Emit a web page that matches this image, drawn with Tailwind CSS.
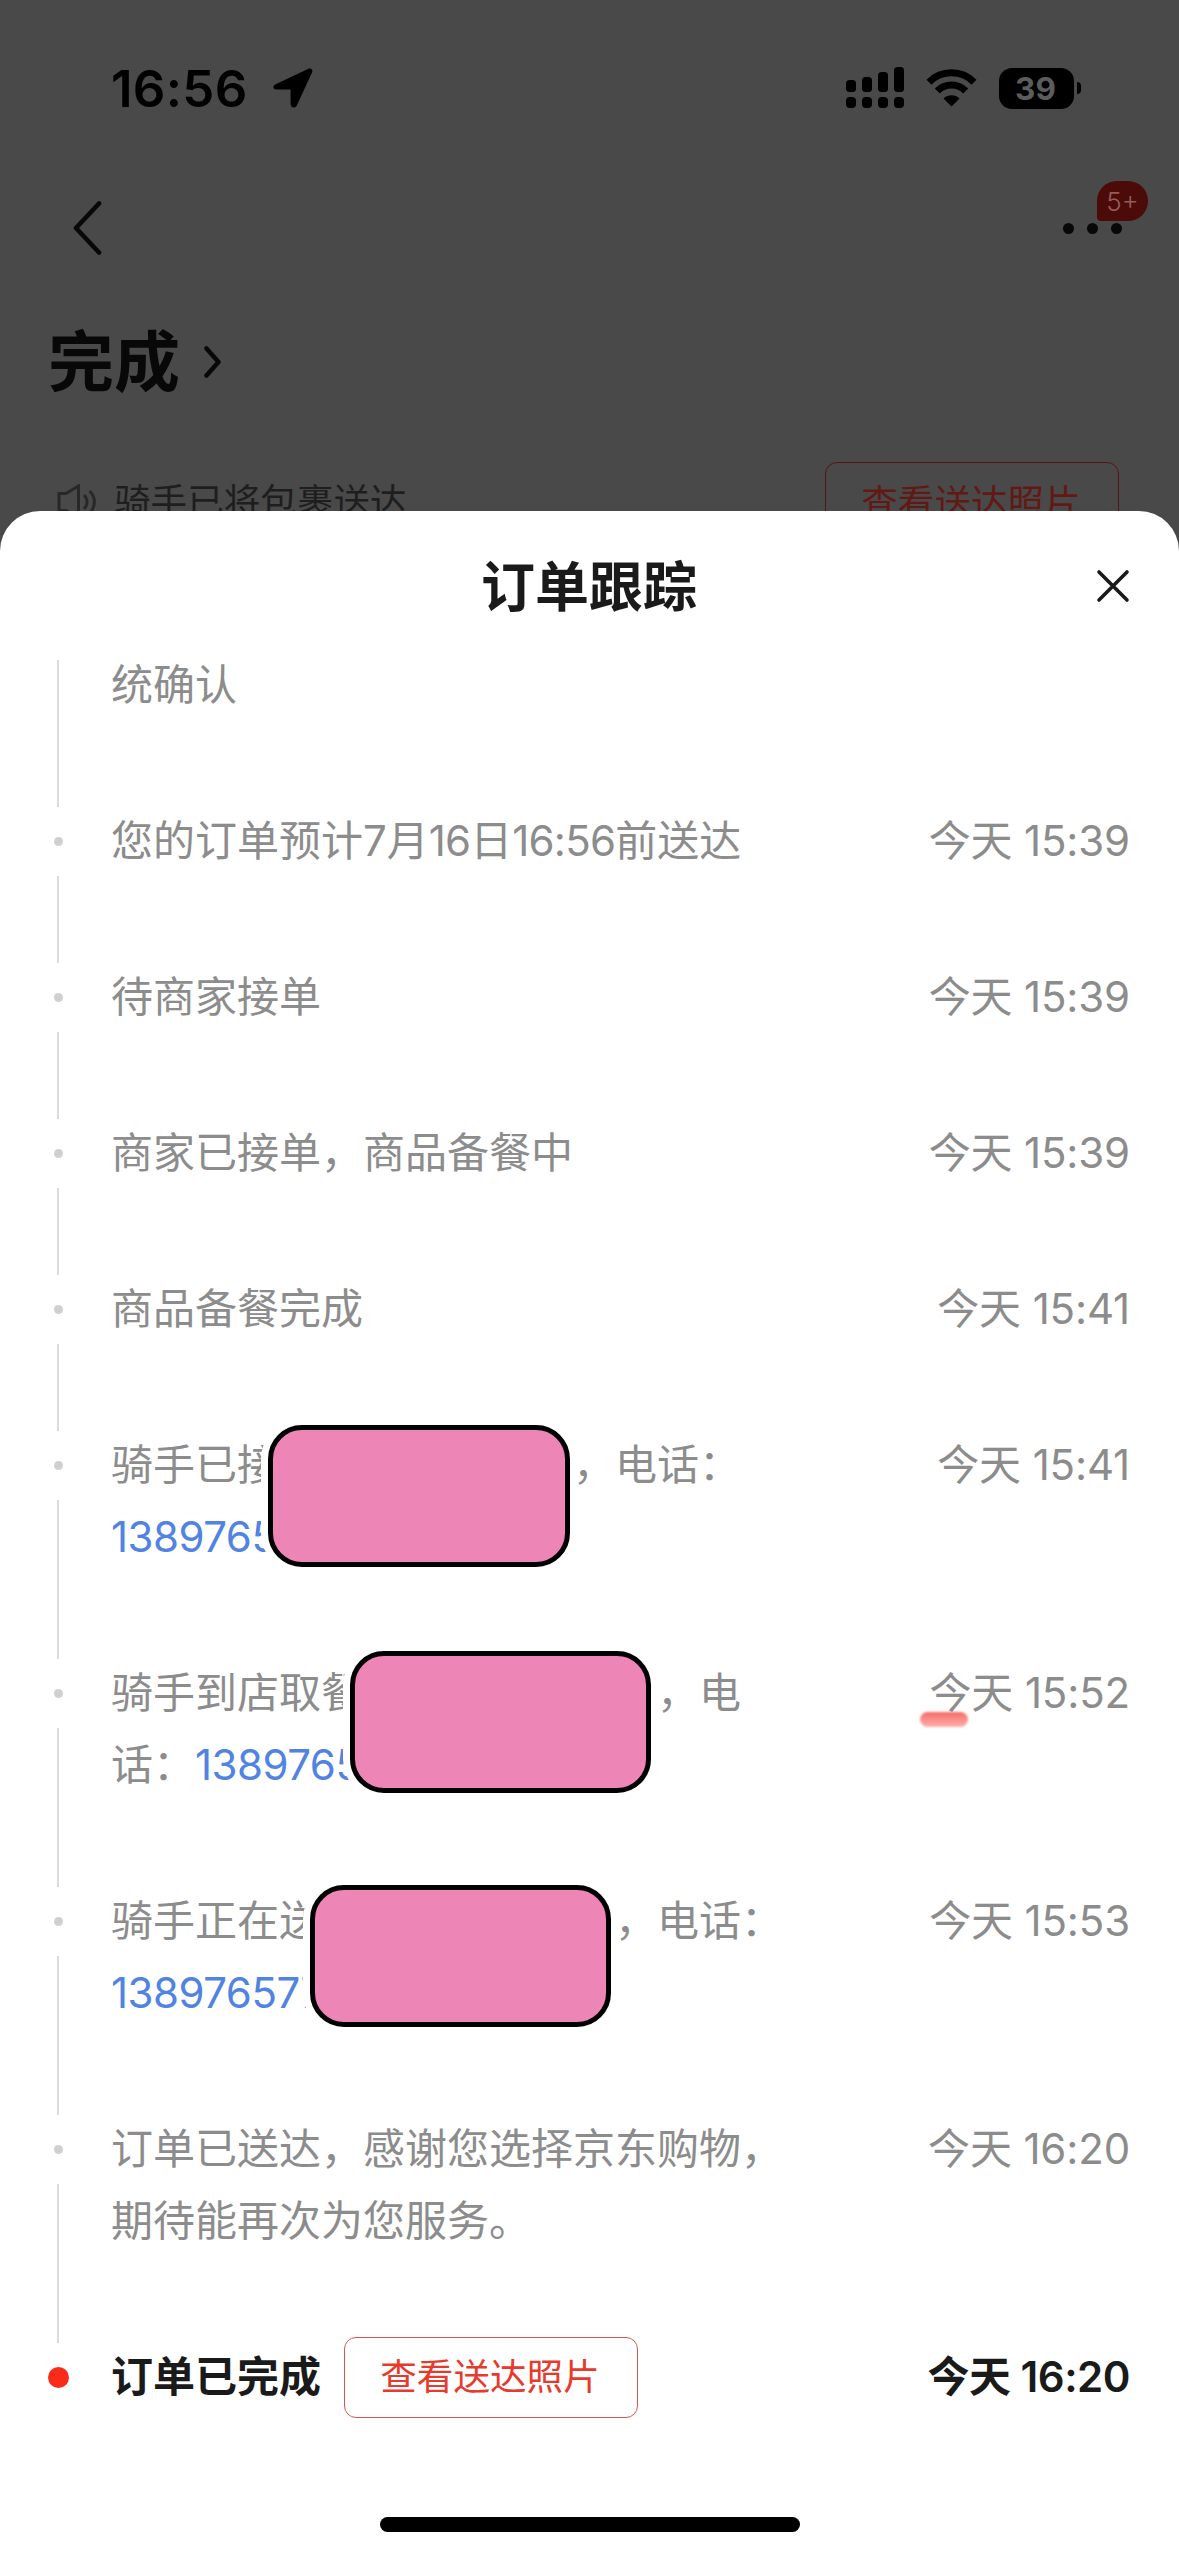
<!DOCTYPE html>
<html lang="zh-CN">
  <head>
    <meta charset="UTF-8" />
    <meta name="viewport" content="width=device-width, initial-scale=1.0" />
    <title>订单跟踪</title>
    <script src="https://cdn.jsdelivr.net/npm/@tailwindcss/browser@4"></script>
  </head>
  <body class="bg-[#494949] font-['Inter','Noto_Sans_CJK_SC',sans-serif]">
    <div class="relative w-[1179px] h-[2556px] overflow-hidden flex flex-col">
      <!-- order page, dimmed -->
      <div class="h-[512px] shrink-0 overflow-hidden flex flex-col">
        <!-- status bar -->
        <div class="h-[176px] shrink-0 pl-[111px] pr-[98px] flex items-center justify-between text-black">
          <div class="flex items-center gap-[25px]">
            <span class="text-[51px] leading-none font-semibold tracking-[0.3px]">16:56</span>
            <svg width="40" height="40" viewBox="0 0 40 40"><path d="M35.5 .8 2.6 16.2C-.8 17.8 0 21.6 3.4 21.6H17.6V36c0 4 4.6 4.8 6.2 1.4L39 4.5C40.4 1.6 38-.4 35.5.8Z" /></svg>
          </div>
          <div class="flex items-center">
            <svg width="58" height="42" viewBox="0 0 58 42">
              <rect x="0" y="13" width="10" height="12" rx="3.5" />
              <rect x="16" y="10" width="10" height="15" rx="3.5" />
              <rect x="32" y="5" width="10" height="20" rx="3.5" />
              <rect x="48" y="0" width="10" height="25" rx="3.5" />
              <rect x="0" y="30" width="10" height="11" rx="4" />
              <rect x="16" y="30" width="10" height="11" rx="4" />
              <rect x="32" y="30" width="10" height="11" rx="4" />
              <rect x="48" y="30" width="10" height="11" rx="4" />
            </svg>
            <svg class="ml-[22px]" width="51" height="38" viewBox="0 0 51 38">
              <path d="M3 13.2a31.8 31.8 0 0 1 45 0M11.3 22a20 20 0 0 1 28.4 0" fill="none" stroke="#000" stroke-width="7" />
              <path d="M25.5 37.5 17.5 29.6a11.5 11.5 0 0 1 16 0Z" />
            </svg>
            <div class="ml-[22px] w-[75px] h-[41px] pr-[2px] rounded-[13px] bg-black text-[#5c5c5c] text-[31.5px] leading-[42px] font-bold text-center">39</div>
            <div class="ml-[3px] w-[4px] h-[12px] rounded-r-full bg-black"></div>
          </div>
        </div>
        <!-- nav bar -->
        <div class="h-[104px] shrink-0 pl-[72px] pr-[57px] flex items-center justify-between">
          <svg width="31" height="54" viewBox="0 0 31 54"><path d="M27 2.500 4 27l23 24.500" fill="none" stroke="#080808" stroke-width="4.600" stroke-linecap="round" stroke-linejoin="round" /></svg>
          <div class="relative flex gap-[13px]">
            <i class="size-[11px] rounded-full bg-[#080808]"></i>
            <i class="size-[11px] rounded-full bg-[#080808]"></i>
            <i class="size-[11px] rounded-full bg-[#080808]"></i>
            <span class="absolute left-[34px] -top-[42px] w-[51px] h-[40px] rounded-[20px] rounded-bl-[4px] bg-[#4c0a08] text-[#945c5b] text-[26px] leading-[42px] text-center font-light">5+</span>
          </div>
        </div>
        <div class="h-[164px] shrink-0 pl-[48px] flex items-center gap-[24px]">
          <h1 class="text-[66px] leading-none font-semibold text-[#080808]">完成</h1>
          <svg width="18" height="32" viewBox="0 0 18 32"><path d="M2.500 2.500 14.500 16 2.500 29.500" fill="none" stroke="#080808" stroke-width="4.500" stroke-linecap="round" stroke-linejoin="round" /></svg>
        </div>
        <div class="h-[116px] shrink-0 pl-[57px] pr-[60px] flex items-center justify-between">
          <div class="flex items-center gap-[17px]">
            <svg width="40" height="36" viewBox="0 0 40 36" fill="none" stroke="#282828" stroke-width="3"><path d="M2 9.500h7L21.500 2v32L9 26.500H2ZM27 11c4 4 4 10 0 14M32.500 7c6.500 6 6.500 16 0 22" /></svg>
            <span class="text-[36.6px] leading-none text-[#1e1e1e]">骑手已将包裹送达</span>
          </div>
          <span class="w-[294px] h-[81px] pr-[2px] rounded-[12px] border-1 border-[#521613] text-[36.6px] leading-[80px] text-center text-[#611915]">查看送达照片</span>
        </div>
      </div>

      <!-- tracking sheet -->
      <div class="absolute inset-x-0 top-[511px] bottom-0 rounded-t-[40px] bg-white flex flex-col">
        <div class="h-[149px] shrink-0 pl-[82px] pr-[49px] flex items-center">
          <h2 class="flex-1 text-center text-[54px] leading-[58px] pt-[4px] font-semibold text-[#1a1a1a]">订单跟踪</h2>
          <svg width="34" height="34" viewBox="0 0 34 34"><path d="M3 3 31 31M31 3 3 31" stroke="#1a1a1a" stroke-width="3.600" stroke-linecap="round" /></svg>
        </div>

        <div class="flex-1 overflow-hidden">
          <ul class="-mt-[11px] pl-[46px] pr-[49px] text-[42px] leading-[72px] text-[#8c8c8c]">
            <li class="flex">
              <div class="w-[24px] mr-[41px] -mb-[2px] flex flex-col items-center"><i class="w-[2px] flex-1 bg-[#dcdcdc]"></i></div>
              <p class="flex-1 pb-[84px]">统确认</p>
            </li>
            <li class="flex">
              <div class="w-[24px] mr-[41px] -mb-[2px] flex flex-col items-center"><i class="size-[9px] mt-[32px] mb-[30px] rounded-full bg-[#cfcfcf]"></i><i class="w-[2px] flex-1 bg-[#dcdcdc]"></i></div>
              <p class="flex-1 pb-[84px]">您的订单预计7月<span class="tracking-[-0.8px]">16</span>日<span class="tracking-[-0.8px]">16:56</span>前送达</p>
              <time class="tracking-[-0.15px]">今天 15:39</time>
            </li>
            <li class="flex">
              <div class="w-[24px] mr-[41px] -mb-[2px] flex flex-col items-center"><i class="size-[9px] mt-[32px] mb-[30px] rounded-full bg-[#cfcfcf]"></i><i class="w-[2px] flex-1 bg-[#dcdcdc]"></i></div>
              <p class="flex-1 pb-[84px]">待商家接单</p>
              <time class="tracking-[-0.15px]">今天 15:39</time>
            </li>
            <li class="flex">
              <div class="w-[24px] mr-[41px] -mb-[2px] flex flex-col items-center"><i class="size-[9px] mt-[32px] mb-[30px] rounded-full bg-[#cfcfcf]"></i><i class="w-[2px] flex-1 bg-[#dcdcdc]"></i></div>
              <p class="flex-1 pb-[84px]">商家已接单，商品备餐中</p>
              <time class="tracking-[-0.15px]">今天 15:39</time>
            </li>
            <li class="flex">
              <div class="w-[24px] mr-[41px] -mb-[2px] flex flex-col items-center"><i class="size-[9px] mt-[32px] mb-[30px] rounded-full bg-[#cfcfcf]"></i><i class="w-[2px] flex-1 bg-[#dcdcdc]"></i></div>
              <p class="flex-1 pb-[84px]">商品备餐完成</p>
              <time class="tracking-[-0.15px]">今天 15:41</time>
            </li>
            <li class="relative flex">
              <div class="w-[24px] mr-[41px] -mb-[2px] flex flex-col items-center"><i class="size-[9px] mt-[32px] mb-[30px] rounded-full bg-[#cfcfcf]"></i><i class="w-[2px] flex-1 bg-[#dcdcdc]"></i></div>
              <p class="flex-1 pb-[84px] whitespace-nowrap">骑手已接<span class="inline-block w-[294px]"></span>，电话：<br /><span class="text-[#5183e2] tracking-[-0.5px]">1389765</span></p>
              <time class="tracking-[-0.15px]">今天 15:41</time>
              <div class="absolute left-[222px] -top-[4px] w-[302px] h-[142px] rounded-[34px] border-[5px] border-black bg-[#ed85b6] shadow-[0_0_0_7px_#fff]"></div>
            </li>
            <li class="relative flex">
              <div class="w-[24px] mr-[41px] -mb-[2px] flex flex-col items-center"><i class="size-[9px] mt-[32px] mb-[30px] rounded-full bg-[#cfcfcf]"></i><i class="w-[2px] flex-1 bg-[#dcdcdc]"></i></div>
              <p class="flex-1 pb-[84px] whitespace-nowrap">骑手到店取餐<span class="inline-block w-[294px]"></span>，电<br />话：<span class="text-[#5183e2] tracking-[-0.5px]">1389765</span></p>
              <time class="tracking-[-0.15px]">今天 15:52</time>
              <div class="absolute left-[304px] -top-[6px] w-[301px] h-[142px] rounded-[34px] border-[5px] border-black bg-[#ed85b6] shadow-[0_0_0_7px_#fff]"></div>
              <!-- marker stroke under the time -->
              <div class="absolute right-[162px] top-[55px] w-[48px] h-[15px] rounded-full bg-linear-to-b from-[#f56a66] to-[#fdb0ac] blur-[1px]"></div>
            </li>
            <li class="relative flex">
              <div class="w-[24px] mr-[41px] -mb-[2px] flex flex-col items-center"><i class="size-[9px] mt-[32px] mb-[30px] rounded-full bg-[#cfcfcf]"></i><i class="w-[2px] flex-1 bg-[#dcdcdc]"></i></div>
              <p class="flex-1 pb-[84px] whitespace-nowrap">骑手正在送<span class="inline-block w-[294px]"></span>，电话：<br /><span class="text-[#5183e2] tracking-[-0.5px]">138976577</span></p>
              <time class="tracking-[-0.15px]">今天 15:53</time>
              <div class="absolute left-[264px] top-0 w-[301px] h-[142px] rounded-[34px] border-[5px] border-black bg-[#ed85b6] shadow-[0_0_0_7px_#fff]"></div>
            </li>
            <li class="flex">
              <div class="w-[24px] mr-[41px] -mb-[2px] flex flex-col items-center"><i class="size-[9px] mt-[32px] mb-[30px] rounded-full bg-[#cfcfcf]"></i><i class="w-[2px] flex-1 bg-[#dcdcdc]"></i></div>
              <p class="flex-1 pb-[84px]">订单已送达，感谢您选择京东购物，<br />期待能再次为您服务。</p>
              <time class="tracking-[-0.15px]">今天 16:20</time>
            </li>
            <li class="flex items-center h-[72px] font-semibold text-[#1a1a1a]">
              <div class="w-[24px] mr-[41px] flex justify-center"><i class="size-[21px] rounded-full bg-[#fa2c19]"></i></div>
              <p>订单已完成</p>
              <span class="ml-[23px] w-[294px] h-[81px] pr-[2px] shrink-0 rounded-[12px] border-1 border-[#d8574d] text-[36.6px] leading-[79px] font-normal text-center text-[#e83a2c]">查看送达照片</span>
              <time class="ml-auto tracking-[-0.5px]">今天 16:20</time>
            </li>
          </ul>
        </div>
        <div class="mx-auto mb-[24px] w-[420px] h-[15px] shrink-0 rounded-full bg-black"></div>
      </div>
    </div>
  </body>
</html>
